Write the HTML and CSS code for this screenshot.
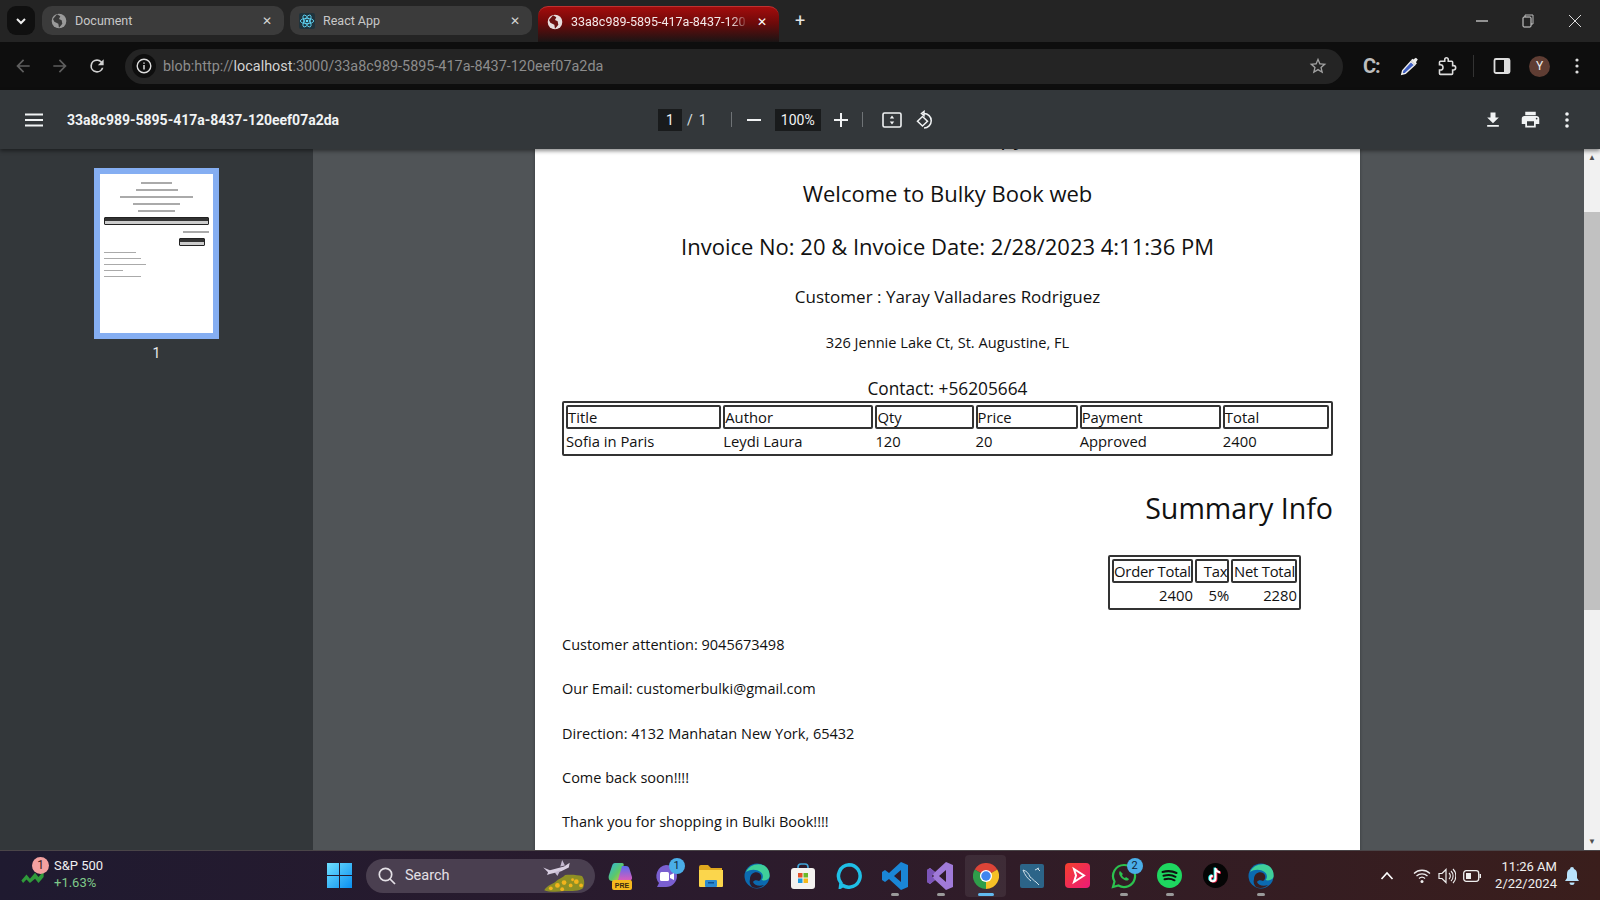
FILE: index.html
```html
<!DOCTYPE html>
<html lang="en">
<head>
    <meta charset="UTF-8">
    <title>33a8c989-5895-417a-8437-120eef07a2da</title>
    <link rel="stylesheet" href="styles.css">
</head>
<body>

<div class="tabstrip">
    <div class="tab-search"><svg width="12" height="12" viewBox="0 0 12 12"><path d="M2 4l4 4 4-4" fill="none" stroke="#eee" stroke-width="2"/></svg></div>
    <div class="tab">
        <svg class="favicon" viewBox="0 0 24 24"><circle cx="12" cy="12" r="11" fill="#9a9a9a"/><path d="M9 2l5 3-2 4 4 2 1 5-5 6-1-6-6-3-2-4z" fill="#3a3a3a"/></svg>
        <span class="tab-title">Document</span>
        <span class="tab-close">✕</span>
    </div>
    <div class="tab">
        <svg class="favicon" viewBox="0 0 24 24"><rect width="24" height="24" fill="#20333c"/><g fill="none" stroke="#61dafb" stroke-width="1.3"><ellipse cx="12" cy="12" rx="10" ry="4"/><ellipse cx="12" cy="12" rx="10" ry="4" transform="rotate(60 12 12)"/><ellipse cx="12" cy="12" rx="10" ry="4" transform="rotate(120 12 12)"/></g><circle cx="12" cy="12" r="2" fill="#61dafb"/></svg>
        <span class="tab-title">React App</span>
        <span class="tab-close">✕</span>
    </div>
    <div class="tab tab-active">
        <svg class="favicon" viewBox="0 0 24 24"><circle cx="12" cy="12" r="11" fill="#e6dcdc"/><path d="M9 2l5 3-2 4 4 2 1 5-5 6-1-6-6-3-2-4z" fill="#6b1212"/></svg>
        <span class="tab-title">33a8c989-5895-417a-8437-120</span>
        <span class="tab-close">✕</span>
    </div>
    <span class="tab-new">+</span>
    <div class="win-controls">
        <svg width="12" height="12" viewBox="0 0 12 12"><path d="M0 6h12" stroke="#ddd" stroke-width="1.2"/></svg>
        <svg width="12" height="14" viewBox="0 0 12 14"><path d="M3 3V1h8v9H9" fill="none" stroke="#bbb"/><rect x="1" y="3" width="8" height="10" rx="1" fill="none" stroke="#ddd"/></svg>
        <svg width="14" height="14" viewBox="0 0 14 14"><path d="M1 1l12 12M13 1L1 13" stroke="#ddd" stroke-width="1"/></svg>
    </div>
</div>

<div class="addressbar">
    <svg class="nav-icon dim" viewBox="0 0 24 24"><path d="M20 11H7.8l5.6-5.6L12 4l-8 8 8 8 1.4-1.4L7.8 13H20z"/></svg>
    <svg class="nav-icon dim" viewBox="0 0 24 24"><path d="M4 11h12.2l-5.6-5.6L12 4l8 8-8 8-1.4-1.4 5.6-5.6H4z"/></svg>
    <svg class="nav-icon" viewBox="0 0 24 24"><path d="M17.65 6.35A7.96 7.96 0 0 0 12 4a8 8 0 1 0 7.73 10h-2.08A6 6 0 1 1 12 6c1.66 0 3.14.69 4.22 1.78L13 11h7V4l-2.35 2.35z"/></svg>
    <div class="omnibox">
        <div class="site-info"><svg width="16" height="16" viewBox="0 0 16 16"><circle cx="8" cy="8" r="6.8" fill="none" stroke="#ddd" stroke-width="1.4"/><path d="M8 7v4.4M8 4.4v1.4" stroke="#ddd" stroke-width="1.5"/></svg></div>
        <span class="url">blob:http://<b>localhost</b>:3000/33a8c989-5895-417a-8437-120eef07a2da</span>
        <svg class="star" viewBox="0 0 24 24"><path d="M22 9.24l-7.19-.62L12 2 9.19 8.63 2 9.24l5.46 4.73L5.82 21 12 17.27 18.18 21l-1.63-7.03L22 9.24zM12 15.4l-3.76 2.27 1-4.28-3.32-2.88 4.38-.38L12 6.1l1.71 4.04 4.38.38-3.32 2.88 1 4.28L12 15.4z"/></svg>
    </div>
    <div class="ext-icons">
        <span class="ext-c">C:</span>
        <svg class="ext-pen" width="22" height="22" viewBox="0 0 24 24"><path d="M13 7L4 17l-1 4 4-1 10-9z" fill="#3f5fc4" stroke="#eee" stroke-width="1.5"/><path d="M13 6l5 5 1.5-2-1-1 2-3-2-2-3 2-1-1z" fill="#eee"/></svg>
        <svg width="21" height="21" viewBox="0 0 24 24"><path d="M19 11V7a1 1 0 0 0-1-1h-4V4a2 2 0 0 0-4 0v2H5a1 1 0 0 0-1 1v3h1a3 3 0 0 1 0 6H4v4a1 1 0 0 0 1 1h13a1 1 0 0 0 1-1v-4h1a2.5 2.5 0 0 0 0-5z" fill="none" stroke="#ddd" stroke-width="1.8"/></svg>
        <span class="ext-sep"></span>
        <svg width="18" height="18" viewBox="0 0 18 18"><rect x="1.5" y="2" width="15" height="14" rx="1.5" fill="none" stroke="#ddd" stroke-width="1.8"/><rect x="11" y="2" width="5.5" height="14" fill="#ddd"/></svg>
        <span class="avatar">Y</span>
        <svg class="dots" width="4" height="16" viewBox="0 0 4 16"><circle cx="2" cy="2" r="1.6"/><circle cx="2" cy="8" r="1.6"/><circle cx="2" cy="14" r="1.6"/></svg>
    </div>
</div>

<div class="pdf-toolbar">
    <div class="pdf-left">
        <svg width="18" height="14" viewBox="0 0 18 14"><path d="M0 1.5h18M0 7h18M0 12.5h18" stroke="#f1f3f4" stroke-width="2"/></svg>
        <span class="pdf-title">33a8c989-5895-417a-8437-120eef07a2da</span>
    </div>
    <div class="pdf-center">
        <span class="page-box">1</span>
        <span class="page-of">/</span>
        <span class="page-total">1</span>
        <span class="pdf-sep sep-a"></span>
        <svg width="14" height="14" viewBox="0 0 14 14"><path d="M0 7h14" stroke="#f1f3f4" stroke-width="2"/></svg>
        <span class="zoom-box">100%</span>
        <svg width="14" height="14" viewBox="0 0 14 14"><path d="M0 7h14M7 0v14" stroke="#f1f3f4" stroke-width="2"/></svg>
        <span class="pdf-sep sep-b"></span>
        <svg class="fit" width="20" height="16" viewBox="0 0 20 16"><rect x="1" y="1" width="18" height="14" rx="1.5" fill="none" stroke="#f1f3f4" stroke-width="1.6"/><path d="M10 3.5l2.2 3h-4.4zM10 12.500l2.2-3h-4.4z" fill="#f1f3f4"/></svg>
        <svg width="19" height="20" viewBox="0 0 19 20"><path d="M8 1.5v4L5.5 3.5zM8 3.5a7.2 7.2 0 1 1 0 14.500" fill="none" stroke="#f1f3f4" stroke-width="1.5"/><path d="M6.5 6.5l-5 4.700 5 4.800 5-4.800z" fill="none" stroke="#f1f3f4" stroke-width="1.5"/></svg>
    </div>
    <div class="pdf-right">
        <svg width="20" height="20" viewBox="0 0 24 24"><path d="M19 9h-4V3H9v6H5l7 7 7-7zM5 18v2h14v-2H5z"/></svg>
        <svg width="21" height="21" viewBox="0 0 24 24"><path d="M19 8H5c-1.66 0-3 1.34-3 3v6h4v4h12v-4h4v-6c0-1.66-1.34-3-3-3zm-3 11H8v-5h8v5zm3-7c-.55 0-1-.45-1-1s.45-1 1-1 1 .45 1 1-.45 1-1 1zm-1-9H6v4h12V3z"/></svg>
        <svg class="pdf-more" width="4" height="16" viewBox="0 0 4 16"><circle cx="2" cy="2" r="1.8"/><circle cx="2" cy="8" r="1.8"/><circle cx="2" cy="14" r="1.8"/></svg>
    </div>
</div>

<div class="main">
    <aside class="sidebar">
        <div class="thumb">
            <div class="thumb-page">
                <i class="t-line t-c w30"></i>
                <i class="t-line t-c w40"></i>
                <i class="t-line t-c w70"></i>
                <i class="t-line t-c w45"></i>
                <i class="t-line t-c w35"></i>
                <div class="t-table"></div>
                <i class="t-line t-r w25"></i>
                <div class="t-table t-small"></div>
                <i class="t-line t-note w30"></i>
                <i class="t-line t-note w35"></i>
                <i class="t-line t-note w40"></i>
                <i class="t-line t-note w18"></i>
                <i class="t-line t-note w35"></i>
            </div>
        </div>
        <span class="thumb-num">1</span>
    </aside>
    <section class="viewer">
        <div class="page">
            <h2 class="line first">Customer copy</h2>
            <h2 class="line">Welcome to Bulky Book web</h2>
            <h2 class="line">Invoice No: 20 &amp; Invoice Date: 2/28/2023 4:11:36 PM</h2>
            <h3 class="customer">Customer : Yaray Valladares Rodriguez</h3>
            <p class="address">326 Jennie Lake Ct, St. Augustine, FL</p>
            <p class="contact">Contact: +56205664</p>
            <table class="items">
                <tr><th class="c-title">Title</th><th class="c-author">Author</th><th class="c-qty">Qty</th><th class="c-price">Price</th><th class="c-pay">Payment</th><th class="c-total">Total</th></tr>
                <tr><td>Sofia in Paris</td><td>Leydi Laura</td><td>120</td><td>20</td><td>Approved</td><td>2400</td></tr>
            </table>
            <h1 class="summary">Summary Info</h1>
            <table class="totals">
                <tr><th class="c-order">Order Total</th><th class="c-tax">Tax</th><th class="c-net">Net Total</th></tr>
                <tr><td>2400</td><td>5%</td><td>2280</td></tr>
            </table>
            <p class="note note-first">Customer attention: 9045673498</p>
            <p class="note">Our Email: customerbulki@gmail.com</p>
            <p class="note">Direction: 4132 Manhatan New York, 65432</p>
            <p class="note">Come back soon!!!!</p>
            <p class="note">Thank you for shopping in Bulki Book!!!!</p>
        </div>
    </section>
    <div class="scrollbar">
        <span class="arrow">▲</span>
        <div class="scroll-track"><div class="scroll-thumb"></div></div>
        <span class="arrow">▼</span>
    </div>
</div>

<div class="taskbar">
    <div class="widget">
        <div class="stock-icon">
            <svg width="23" height="12" viewBox="0 0 26 14"><path d="M0 11l6-7 4 5 6-7 4 5 6-7v7l-6 7-4-5-6 5-4-4-4 4z" fill="#2f9a3a"/></svg>
            <span class="stock-badge">1</span>
        </div>
        <div class="stock-text">
            <span class="stock-name">S&amp;P 500</span>
            <span class="stock-change">+1.63%</span>
        </div>
    </div>
    <svg class="start" width="25" height="25" viewBox="0 0 25 25">
        <defs><linearGradient id="winblue" x1="0" y1="0" x2="1" y2="1"><stop offset="0" stop-color="#6fe0ff"/><stop offset="1" stop-color="#0a8ff0"/></linearGradient></defs>
        <path d="M0 0h12v12H0zM13 0h12v12H13zM0 13h12v12H0zM13 13h12v12H13z" fill="url(#winblue)"/>
    </svg>
    <div class="search">
        <svg width="20" height="20" viewBox="0 0 20 20"><circle cx="8.5" cy="8.5" r="6.2" fill="none" stroke="#e4e0e6" stroke-width="1.7"/><path d="M13 13l5 5" stroke="#e4e0e6" stroke-width="1.7"/></svg>
        <span class="search-label">Search</span>
        <svg class="search-art" width="50" height="34" viewBox="0 0 50 36">
            <path d="M2 9l7 3 15-4 6-4-1 5-8 4-12 3-3 1 1-3z" fill="#d9cfe2"/>
            <path d="M22 1l3 6-5 1zM14 14l6-2-3 6z" fill="#c4b8d0"/>
            <path d="M3 33c4-6 8-6 12-9 3-3 8-4 10-7 6-1 14 0 18 1 3 4 3 9 1 13-4 3-12 3-20 3-8 1-16 1-21-1z" fill="#8f9024"/>
            <g fill="#f2b41c"><circle cx="10" cy="31" r="2"/><circle cx="17" cy="28" r="2.5"/><circle cx="24" cy="25" r="2.5"/><circle cx="22" cy="32" r="2"/><circle cx="31" cy="28" r="2"/><circle cx="37" cy="24" r="2.5"/><circle cx="42" cy="28" r="2"/><circle cx="33" cy="22" r="1.5"/></g>
        </svg>
    </div>
    <div class="apps">
        <div class="app"><svg width="26" height="28" viewBox="0 0 26 28"><defs><linearGradient id="cop" x1="0" y1="0" x2="1" y2="1"><stop offset="0" stop-color="#2fb4e0"/><stop offset=".55" stop-color="#5cc86a"/><stop offset="1" stop-color="#ecc02e"/></linearGradient><linearGradient id="cop2" x1="0" y1="0" x2="0" y2="1"><stop offset="0" stop-color="#5a6cf0"/><stop offset="1" stop-color="#e05cb8"/></linearGradient></defs><path d="M8 1h7c2 0 2 2 1.5 3L12 17c-.5 1.5-1.5 2-3 2H5c-3 0-4-3-3-6L5 4c.5-2 1.5-3 3-3z" fill="url(#cop)"/><path d="M15 4h4c2 0 3 1 3.5 3l2.5 8c.5 2-1 4-3 4h-9c-2 0-2-2-1.5-3z" fill="url(#cop2)"/><rect x="5" y="18" width="20" height="10" rx="2" fill="#f5b81e"/><text x="15" y="25.5" class="pre">PRE</text></svg></div>
        <div class="app"><svg width="24" height="24" viewBox="0 0 24 24"><path d="M12 1a11 11 0 0 1 0 22H3l2-4a11 11 0 0 1 7-18z" fill="#7a5fd0"/><rect x="6" y="8" width="9" height="9" rx="1.5" fill="#fff"/><path d="M16 11l4-2v7l-4-2z" fill="#fff"/></svg><span class="app-badge">1</span></div>
        <div class="app"><svg width="26" height="24" viewBox="0 0 26 24"><path d="M1 3a2 2 0 0 1 2-2h7l3 3h11v6H1z" fill="#e0a81e"/><path d="M1 6h24v16a1 1 0 0 1-1 1H2a1 1 0 0 1-1-1z" fill="#fbd64c"/><rect x="7" y="16" width="12" height="7" rx="1" fill="#2a8ad0"/><rect x="10" y="18" width="6" height="1.5" fill="#0c5090"/></svg></div>
        <div class="app"><svg width="26" height="26" viewBox="0 0 26 26"><circle cx="13" cy="13" r="12.5" fill="#0b6ab0"/><path d="M2 9C5 2 14-1 21 3c4 3 5 7 4.5 11-1 3-5 4-8 3 2-2 2-6-1-8-4-3-10-3-14.5 0z" fill="#3fcf9a"/><path d="M6 16c0-5 5-8 9-6 3 2 3 6 0 8-2-1-5-1-6 1 1 3 6 5 11 3-3 3-8 4-12 2-2-2-3-5-2-8z" fill="#2b1c2c"/></svg></div>
        <div class="app"><svg width="24" height="26" viewBox="0 0 24 26"><path d="M7 6V4a3 3 0 0 1 3-3h4a3 3 0 0 1 3 3v2" fill="none" stroke="#3fa4d8" stroke-width="1.6"/><rect x="0" y="5" width="24" height="21" rx="3" fill="#f4f2f0"/><rect x="7" y="10" width="4.5" height="4.5" fill="#e2502a"/><rect x="12.5" y="10" width="4.5" height="4.5" fill="#6ab82a"/><rect x="7" y="15.5" width="4.5" height="4.5" fill="#1a9ae0"/><rect x="12.5" y="15.5" width="4.5" height="4.5" fill="#f4b81a"/></svg></div>
        <div class="app"><svg width="26" height="26" viewBox="0 0 26 26"><path d="M13 1.8a11.2 11.2 0 1 1-6 20.700l-2.5 1.5 .5-4A11.2 11.2 0 0 1 13 1.8z" fill="none" stroke="#1fbfe6" stroke-width="3.5"/></svg></div>
        <div class="app"><svg width="26" height="28" viewBox="0 0 26 28"><path d="M19 0l7 3v22l-7 3-12-11-4 3-3-2v-8l3-2 4 3zM19 8l-7 6 7 6z" fill="#1a86d6"/></svg><i class="pill"></i></div>
        <div class="app"><svg width="26" height="28" viewBox="0 0 26 28"><path d="M19 0l7 3v22l-7 3-11-10-5 4-3-2V8l3-2 5 4zM19 8l-7 6 7 6zM3 10v8l4-4z" fill="#a07ad8"/><path d="M0 8l3-2 5 4-3 4 3 4-5 4-3-2z" fill="#7c55b8"/></svg><i class="pill"></i></div>
        <div class="app app-current"><svg width="26" height="26" viewBox="0 0 24 24"><path d="M12 12L1.6 6A12 12 0 0 1 22.4 6z" fill="#dc4437"/><path d="M12 12L22.4 6A12 12 0 0 1 12 24z" fill="#f6c026"/><path d="M12 12L12 24A12 12 0 0 1 1.6 6z" fill="#2f9e4a"/><circle cx="12" cy="12" r="5.6" fill="#fff"/><circle cx="12" cy="12" r="4.4" fill="#3f86ee"/></svg><i class="pill pill-current"></i></div>
        <div class="app"><svg width="24" height="24" viewBox="0 0 24 24"><rect width="24" height="24" rx="2" fill="#2c6488"/><path d="M3 6c4 1 6 4 7 7 2 1 4 4 6 5l3 3M3 6c2 5 4 8 8 11M17 4l3 3M15 6l4-2" fill="none" stroke="#cfe0ea" stroke-width="1"/></svg></div>
        <div class="app"><svg width="25" height="25" viewBox="0 0 25 25"><defs><linearGradient id="vid" x1="0" y1="0" x2="1" y2="1"><stop offset="0" stop-color="#f5402c"/><stop offset="1" stop-color="#ec1a78"/></linearGradient></defs><rect width="25" height="25" rx="4" fill="url(#vid)"/><path d="M9 6l10 6.5L9 19l2-6.5z" fill="none" stroke="#fff" stroke-width="2"/></svg></div>
        <div class="app"><svg width="26" height="26" viewBox="0 0 26 26"><path d="M13 2a11 11 0 1 1-5.5 20.5L2 24l1.5-5.5A11 11 0 0 1 13 2z" fill="none" stroke="#2cc24f" stroke-width="2.2"/><path d="M9 8c-2 2 0 6 3 8s5 2 6 0l-3-2-1 1c-1 0-3-2-3-3l1-1z" fill="#2cc24f"/></svg><span class="app-badge">2</span><i class="pill"></i></div>
        <div class="app"><svg width="25" height="25" viewBox="0 0 25 25"><circle cx="12.5" cy="12.5" r="12.5" fill="#1ed760"/><path d="M5.5 9c5-1.4 10-1 14 1M6.5 12.8c4.5-1.2 9-.8 12 1M7.5 16.3c3.5-.9 7-.6 10 1" fill="none" stroke="#111" stroke-width="2" stroke-linecap="round"/></svg><i class="pill"></i></div>
        <div class="app"><svg width="25" height="25" viewBox="0 0 25 25"><circle cx="12.5" cy="12.5" r="12.5" fill="#050505"/><path d="M12.5 5v10.5a2.7 2.7 0 1 1-2.7-2.7M12.5 5c.3 2.5 2 4 4.5 4.3" fill="none" stroke="#25f4ee" stroke-width="2.2" transform="translate(-.8 -.5)"/><path d="M12.5 5v10.5a2.7 2.7 0 1 1-2.7-2.7M12.5 5c.3 2.5 2 4 4.5 4.3" fill="none" stroke="#fe2c55" stroke-width="2.2" transform="translate(.8 .5)"/><path d="M12.5 5v10.5a2.7 2.7 0 1 1-2.7-2.7M12.5 5c.3 2.5 2 4 4.5 4.3" fill="none" stroke="#fff" stroke-width="2"/></svg></div>
        <div class="app"><svg width="26" height="26" viewBox="0 0 26 26"><circle cx="13" cy="13" r="12.5" fill="#0b6ab0"/><path d="M2 9C5 2 14-1 21 3c4 3 5 7 4.5 11-1 3-5 4-8 3 2-2 2-6-1-8-4-3-10-3-14.5 0z" fill="#3fcf9a"/><path d="M6 16c0-5 5-8 9-6 3 2 3 6 0 8-2-1-5-1-6 1 1 3 6 5 11 3-3 3-8 4-12 2-2-2-3-5-2-8z" fill="#3a1e20"/></svg><i class="pill"></i></div>
    </div>
    <div class="tray">
        <svg class="tray-chevron" width="14" height="10" viewBox="0 0 14 10"><path d="M1.5 8L7 2l5.5 6" fill="none" stroke="#fff" stroke-width="1.6"/></svg>
        <svg width="18" height="16" viewBox="0 0 18 16"><path d="M1 5.5a11.5 11.5 0 0 1 16 0M3.5 8a8 8 0 0 1 11 0M6 10.5a4.5 4.5 0 0 1 6 0" fill="none" stroke="#eee" stroke-width="1.3"/><circle cx="9" cy="13.5" r="1.5" fill="#eee"/></svg>
        <svg width="18" height="16" viewBox="0 0 18 16"><path d="M1 5.5h3l4-4v13l-4-4H1z" fill="none" stroke="#eee" stroke-width="1.2"/><path d="M11 5a4 4 0 0 1 0 6M13 3a7 7 0 0 1 0 10M15 1a10 10 0 0 1 0 14" fill="none" stroke="#eee" stroke-width="1.1"/></svg>
        <svg width="18" height="12" viewBox="0 0 18 12"><rect x=".7" y=".7" width="15" height="10.6" rx="2.5" fill="none" stroke="#eee" stroke-width="1.3"/><rect x="3" y="3" width="5" height="6" fill="#eee"/><rect x="16.5" y="4" width="1.5" height="4" fill="#eee"/></svg>
        <div class="clock"><span>11:26 AM</span><span>2/22/2024</span></div>
        <svg class="bell" width="16" height="18" viewBox="0 0 16 18"><path d="M8 0a2 2 0 0 1 2 2c2 .6 3 2.5 3 5v4l2 3H1l2-3V7c0-2.5 1-4.4 3-5a2 2 0 0 1 2-2zM5.5 15.5h5a2.5 2.5 0 0 1-5 0z" fill="#b9e2fb"/></svg>
    </div>
</div>

</body>
</html>
```

FILE: styles.css
```css
* {
    box-sizing: border-box;
}
body {
    margin: 0;
    width: 1600px;
    height: 900px;
    overflow: hidden;
    font-family: Roboto, "Liberation Sans", sans-serif;
    background: #33373a;
}
svg {
    flex: none;
    display: block;
}

/* tab strip */
.tabstrip {
    height: 42px;
    background: #242424;
    display: flex;
    align-items: flex-start;
    padding: 6px 0 0 7px;
}
.tab-search {
    width: 28px;
    height: 29px;
    background: #101010;
    border-radius: 9px;
    display: flex;
    align-items: center;
    justify-content: center;
    margin-right: 7px;
}
.tab {
    width: 242px;
    height: 29px;
    margin-right: 6px;
    padding: 0 12px 0 9px;
    background: #3b3b3b;
    border-radius: 10px;
    display: flex;
    align-items: center;
    color: #c8c8c8;
    font-size: 12.5px;
}
.favicon {
    width: 16px;
    height: 16px;
    border-radius: 2px;
    margin-right: 8px;
}
.tab-title {
    flex: 1;
    white-space: nowrap;
    overflow: hidden;
}
.tab-close {
    font-size: 12px;
    color: #d4d4d4;
}
.tab-active {
    height: 36px;
    width: 241px;
    padding: 0 12px 6px 9px;
    margin-right: 0;
    border-top: 1px solid #c03030;
    border-radius: 10px 10px 0 0;
    background: linear-gradient(#a30c0c, #6f0a0a 45%, #1a1414);
    color: #f2eaea;
}
.tab-active .tab-title {
    margin-right: 8px;
    -webkit-mask-image: linear-gradient(90deg, #000 90%, transparent);
    mask-image: linear-gradient(90deg, #000 90%, transparent);
}
.tab-active .tab-close {
    color: #fff;
}
.tab-new {
    width: 18px;
    margin-left: 12px;
    height: 29px;
    line-height: 30px;
    color: #e4e4e4;
    font-size: 18px;
    text-align: center;
}
.win-controls {
    margin-left: auto;
    height: 29px;
    display: flex;
    align-items: center;
    gap: 34px;
    padding-right: 18px;
}

/* address bar */
.addressbar {
    height: 48px;
    background: #0e0e0e;
    display: flex;
    align-items: center;
    padding-left: 13px;
    gap: 17px;
}
.nav-icon {
    width: 20px;
    height: 20px;
    fill: #d0d0d0;
}
.nav-icon.dim {
    fill: #5e5e5e;
}
.omnibox {
    width: 1218px;
    height: 35px;
    margin-left: 1px;
    background: #242424;
    border-radius: 18px;
    display: flex;
    align-items: center;
    padding: 0 15px 0 7px;
}
.site-info {
    width: 24px;
    height: 24px;
    border-radius: 50%;
    background: #0e0e0e;
    display: flex;
    align-items: center;
    justify-content: center;
    margin-right: 7px;
}
.url {
    flex: 1;
    color: #8d8d8d;
    font-size: 14.4px;
    white-space: nowrap;
}
.url b {
    color: #d4d4d4;
    font-weight: 400;
}
.star {
    width: 20px;
    height: 20px;
    fill: #a0a0a0;
}
.ext-icons {
    display: flex;
    align-items: center;
    margin-left: 3px;
    flex: 1;
}
.ext-c {
    width: 18px;
    margin-right: 18px;
    color: #bdbdbd;
    font-size: 20px;
    font-weight: 700;
    letter-spacing: -1px;
    white-space: nowrap;
}
.ext-pen {
    margin-right: 15px;
}
.ext-sep {
    width: 1px;
    height: 22px;
    background: #333;
    margin: 0 19px 0 16px;
}
.avatar {
    width: 21px;
    height: 21px;
    border-radius: 50%;
    margin: 0 25px 0 18px;
    background: #5f3d33;
    color: #eee;
    font-size: 12px;
    text-align: center;
    line-height: 21px;
}
.dots {
    fill: #ddd;
}

/* pdf toolbar */
.pdf-toolbar {
    height: 59px;
    background: #33373a;
    display: flex;
    align-items: center;
    color: #f1f3f4;
    position: relative;
    box-shadow: 0 2px 4px rgba(0, 0, 0, 0.45);
}
.pdf-left {
    width: 658px;
    display: flex;
    align-items: center;
    padding-left: 25px;
    gap: 24px;
}
.pdf-title {
    font-size: 14px;
    font-weight: 700;
    white-space: nowrap;
}
.pdf-center {
    display: flex;
    align-items: center;
    font-size: 14px;
}
.page-box {
    width: 24px;
    height: 22px;
    background: #191b1c;
    line-height: 22px;
    text-align: center;
}
.page-of {
    margin: 0 6px 0 5px;
    color: #dfe1e2;
}
.page-total {
    width: 8px;
    color: #d6dadd;
}
.pdf-sep {
    width: 1px;
    height: 15px;
    background: #6f7376;
}
.sep-a {
    margin: 0 15px 0 24px;
}
.zoom-box {
    width: 46px;
    height: 22px;
    margin: 0 13px 0 14px;
    background: #191b1c;
    line-height: 22px;
    text-align: center;
}
.sep-b {
    margin: 0 19px 0 14px;
}
.fit {
    margin-right: 14px;
}
.pdf-right {
    margin-left: auto;
    display: flex;
    align-items: center;
    gap: 17px;
    padding-right: 31px;
    fill: #f1f3f4;
}
.pdf-more {
    margin-left: 7px;
}

/* main area */
.main {
    height: 701px;
    display: flex;
    overflow: hidden;
}
.sidebar {
    width: 313px;
    background: #33373a;
    display: flex;
    flex-direction: column;
    align-items: center;
    padding-top: 19px;
}
.thumb {
    width: 125px;
    height: 171px;
    border: 6px solid #85aef2;
    background: #fff;
}
.thumb-page {
    padding: 8px 4px;
    display: flex;
    flex-direction: column;
    gap: 5.5px;
}
.t-line {
    display: block;
    height: 1.5px;
    background: #aaa;
}
.t-c {
    align-self: center;
}
.t-r {
    align-self: flex-end;
    height: 2px;
}
.t-note {
    margin-bottom: -1px;
}
.w18 { width: 18%; }
.w25 { width: 25%; }
.w30 { width: 30%; }
.w35 { width: 35%; }
.w40 { width: 40%; }
.w45 { width: 45%; }
.w70 { width: 70%; }
.t-table {
    height: 8px;
    border: 1px solid #222;
    border-radius: 1px;
    background: linear-gradient(#333 50%, #ccc 50%);
}
.t-small {
    width: 26px;
    align-self: flex-end;
    margin-right: 4px;
}
.thumb-num {
    margin-top: 6px;
    color: #e8eaed;
    font-size: 14px;
}
.viewer {
    width: 1271px;
    background: #505457;
    overflow: hidden;
    display: flex;
    justify-content: center;
    padding-right: 2px;
}

/* pdf page */
.page {
    width: 825px;
    height: 1000px;
    flex: none;
    background: #fff;
    padding: 0 27px;
    color: #111;
    font-family: "Open Sans", "Noto Sans", sans-serif;
    font-size: 14.5px;
    box-shadow: 0 0 3px rgba(0, 0, 0, 0.3);
}
.line {
    margin: 0;
    height: 53px;
    line-height: 53px;
    text-align: center;
    font-size: 22px;
    font-weight: 400;
    white-space: nowrap;
}
.line.first {
    margin-top: -35px;
    line-height: 45px;
}
.customer {
    margin: 0;
    height: 46px;
    line-height: 47px;
    text-align: center;
    font-size: 17px;
    font-weight: 400;
}
.address {
    margin: 0;
    height: 49px;
    line-height: 47px;
    text-align: center;
    font-size: 14.6px;
}
.contact {
    margin: 0;
    height: 33px;
    line-height: 42px;
    text-align: center;
    font-size: 17.3px;
}
table {
    border: 2px solid #333;
    border-radius: 2px;
    border-spacing: 2px;
    font-size: 14.8px;
}
th {
    border: 2px solid #333;
    border-radius: 2px;
    font-weight: 400;
    padding: 0;
    height: 24px;
    line-height: 18px;
    text-align: left;
    white-space: nowrap;
}
td {
    padding: 0;
    height: 21px;
    line-height: 21px;
    text-align: left;
}
.items {
    width: 771px;
    table-layout: fixed;
}
.c-title { width: 155px; }
.c-author { width: 150px; }
.c-qty { width: 98px; }
.c-price { width: 102px; }
.c-pay { width: 141px; }
.c-total { width: 106px; }
.summary {
    margin: 30px 0 0;
    height: 44px;
    line-height: 44px;
    text-align: right;
    font-size: 28.6px;
    font-weight: 400;
}
.totals {
    margin: 25px 32px 0 auto;
    width: 193px;
    table-layout: fixed;
}
.totals th {
    letter-spacing: -0.2px;
}
.totals th,
.totals td {
    text-align: right;
}
.c-order { width: 80px; }
.c-tax { width: 34px; }
.c-net { width: 65px; }
.note {
    margin: 0 0 22.3px;
    height: 22px;
    line-height: 22px;
}
.note-first {
    margin-top: 24px;
}

/* scrollbar */
.scrollbar {
    width: 16px;
    background: #f1f1f1;
    display: flex;
    flex-direction: column;
    align-items: center;
    color: #505050;
    font-size: 8px;
}
.arrow {
    height: 17px;
    line-height: 17px;
}
.scroll-track {
    flex: 1;
    width: 100%;
    padding-top: 46px;
}
.scroll-thumb {
    height: 398px;
    background: #c1c1c1;
}

/* taskbar */
.taskbar {
    height: 50px;
    background: linear-gradient(90deg, #1f1a30, #2b1b2d 45%, #3a1e1c);
    border-top: 1px solid #4a4548;
    display: flex;
    align-items: center;
    color: #f0f0f0;
}
.widget {
    width: 327px;
    flex: none;
    display: flex;
    align-items: center;
    padding-left: 21px;
    gap: 2px;
}
.stock-icon {
    position: relative;
    width: 31px;
    height: 34px;
    padding-top: 12px;
}
.stock-badge {
    position: absolute;
    top: -2px;
    left: 11px;
    width: 17px;
    height: 17px;
    border-radius: 50%;
    background: #f4a0a0;
    color: #3a1a1a;
    font-size: 12px;
    line-height: 17px;
    text-align: center;
}
.stock-text {
    display: flex;
    flex-direction: column;
    margin-top: -3px;
    font-size: 13px;
    line-height: 17px;
}
.stock-change {
    color: #7fc98a;
}
.start {
    margin-right: 14px;
}
.search {
    width: 229px;
    height: 34px;
    border-radius: 17px;
    background: #4a3f50;
    display: flex;
    align-items: center;
    padding-left: 11px;
    color: #e4e0e6;
    font-size: 14.5px;
    flex: none;
    margin-right: 2px;
}
.search-label {
    margin-left: 8px;
}
.search-art {
    margin-left: auto;
    margin-right: 5px;
}
.apps {
    display: flex;
    flex: none;
}
.app {
    width: 45.8px;
    height: 49px;
    position: relative;
    display: flex;
    align-items: center;
    justify-content: center;
}
.pre {
    font-family: "Liberation Sans", sans-serif;
    font-size: 7px;
    font-weight: 700;
    fill: #3a2a10;
    text-anchor: middle;
}
.app-badge {
    position: absolute;
    top: 7px;
    right: 4px;
    width: 16px;
    height: 16px;
    border-radius: 50%;
    background: #4aaee8;
    color: #10243a;
    font-size: 11px;
    line-height: 16px;
    text-align: center;
}
.pill {
    position: absolute;
    bottom: 4px;
    left: 19px;
    width: 8px;
    height: 3px;
    border-radius: 2px;
    background: #9a9a9a;
}
.app-current::before {
    content: "";
    position: absolute;
    top: 4px;
    left: 2px;
    width: 41px;
    height: 42px;
    border-radius: 4px;
    background: rgba(255, 255, 255, 0.07);
}
.app-current svg {
    position: relative;
}
.pill-current {
    left: 15px;
    width: 16px;
    background: #62baf0;
}
.tray {
    display: flex;
    align-items: center;
    margin-left: 96px;
    gap: 7px;
}
.tray-chevron {
    margin-right: 12px;
}
.clock {
    margin-left: 9px;
    width: 60px;
    display: flex;
    flex-direction: column;
    align-items: flex-end;
    margin-top: -2px;
    font-size: 13px;
    line-height: 17px;
    white-space: nowrap;
}
.bell {
    margin-left: 0;
}
```
